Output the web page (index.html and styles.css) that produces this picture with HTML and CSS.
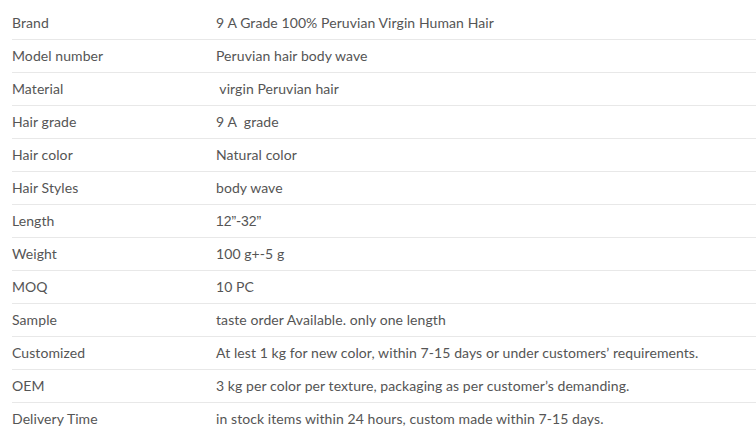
FILE: index.html
```html
<!DOCTYPE html>
<html>
<head>
<meta charset="utf-8">
<link rel="stylesheet" href="styles.css">
</head>
<body>
<table class="spec">
<tbody>
<tr><td class="k">Brand</td><td class="v">9 A Grade 100% Peruvian Virgin Human Hair</td></tr>
<tr><td class="k">Model number</td><td class="v">Peruvian hair body wave</td></tr>
<tr><td class="k">Material</td><td class="v">&nbsp;virgin Peruvian hair</td></tr>
<tr><td class="k">Hair grade</td><td class="v">9 A &nbsp;grade</td></tr>
<tr><td class="k">Hair color</td><td class="v">Natural color</td></tr>
<tr><td class="k">Hair Styles</td><td class="v">body wave</td></tr>
<tr><td class="k">Length</td><td class="v"><span class="alt">12”-32”</span></td></tr>
<tr><td class="k">Weight</td><td class="v">100 g+-5 g</td></tr>
<tr><td class="k">MOQ</td><td class="v">10 PC</td></tr>
<tr><td class="k">Sample</td><td class="v">taste order Available. only one length</td></tr>
<tr><td class="k">Customized</td><td class="v">At lest 1 kg for new color, within 7-15 days or under customers’ requirements.</td></tr>
<tr><td class="k">OEM</td><td class="v">3 kg per color per texture, packaging as per customer’s demanding.</td></tr>
<tr><td class="k">Delivery Time</td><td class="v">in stock items within 24 hours, custom made within 7-15 days.</td></tr>
</tbody>
</table>
</body>
</html>
```
FILE: styles.css
```css
html, body {
  margin: 0;
  padding: 0;
  background: #fff;
}
body {
  padding: 7px 0 0 12px;
  font-family: Lato, "Open Sans", sans-serif;
  font-size: 14px;
  letter-spacing: 0.08px;
  color: #555;
}
.spec {
  border-collapse: collapse;
  width: 744px;
}
.spec td {
  height: 32px;
  padding: 0;
  vertical-align: middle;
  border-bottom: 1px solid #e8e8e8;
  line-height: 16px;
  white-space: nowrap;
}
.spec td.k {
  width: 204px;
}
.alt {
  font-family: "Liberation Sans", Arial, sans-serif;
  letter-spacing: 0;
}
```
